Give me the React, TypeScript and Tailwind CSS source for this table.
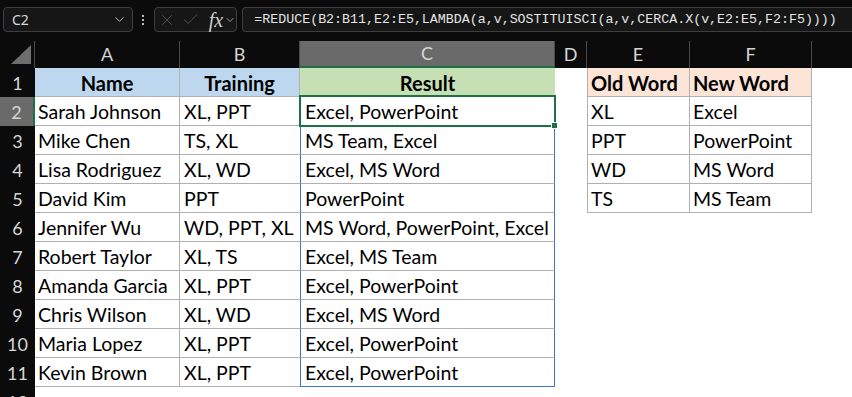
import { X, Check, ChevronDown } from 'lucide-react';

const data = [
  ['Sarah Johnson', 'XL, PPT', 'Excel, PowerPoint'],
  ['Mike Chen', 'TS, XL', 'MS Team, Excel'],
  ['Lisa Rodriguez', 'XL, WD', 'Excel, MS Word'],
  ['David Kim', 'PPT', 'PowerPoint'],
  ['Jennifer Wu', 'WD, PPT, XL', 'MS Word, PowerPoint, Excel'],
  ['Robert Taylor', 'XL, TS', 'Excel, MS Team'],
  ['Amanda Garcia', 'XL, PPT', 'Excel, PowerPoint'],
  ['Chris Wilson', 'XL, WD', 'Excel, MS Word'],
  ['Maria Lopez', 'XL, PPT', 'Excel, PowerPoint'],
  ['Kevin Brown', 'XL, PPT', 'Excel, PowerPoint'],
];

const lookup = [
  ['XL', 'Excel'],
  ['PPT', 'PowerPoint'],
  ['WD', 'MS Word'],
  ['TS', 'MS Team'],
];

const formula = '=REDUCE(B2:B11,E2:E5,LAMBDA(a,v,SOSTITUISCI(a,v,CERCA.X(v,E2:E5,F2:F5))))';

function FormulaBar() {
  return (
    <div className="h-[41px] bg-[#0b0b0b] flex items-start pt-[7px] font-['Noto_Sans',sans-serif]">
      <div className="ml-[3px] w-[132px] h-[25px] rounded-[4px] border border-[#3e3e3e] bg-[#161616] flex items-center justify-between pl-[8px] pr-[5px]">
        <span className="text-[14px] text-[#d8d8d8]">C2</span>
        <ChevronDown size={15} strokeWidth={1.5} className="text-[#c8c8c8]" />
      </div>
      <div className="w-[21px] h-[25px] flex flex-col items-center justify-center gap-[2px]">
        <span className="w-[2px] h-[2px] bg-[#b8b8b8]" />
        <span className="w-[2px] h-[2px] bg-[#b8b8b8]" />
        <span className="w-[2px] h-[2px] bg-[#b8b8b8]" />
      </div>
      <div className="w-[85px] h-[25px] rounded-[4px] border border-[#3e3e3e] bg-[#161616] flex items-center pl-[3px]">
        <X size={18} strokeWidth={1.1} className="text-[#5c5c5c]" />
        <Check size={19} strokeWidth={1.1} className="text-[#5c5c5c] ml-[5px]" />
        <span className="ml-[9px] font-['Liberation_Serif',serif] italic text-[20px] leading-none text-[#cfcfcf]">fx</span>
        <ChevronDown size={12} strokeWidth={1.5} className="text-[#c8c8c8] ml-[1px]" />
      </div>
      <div className="ml-[5px] w-[620px] h-[25px] rounded-l-[4px] border border-r-0 border-[#3e3e3e] bg-[#161616] flex items-center pl-[11px]">
        <span className="font-['Liberation_Mono',monospace] text-[13.3px] text-[#e4e4e4] whitespace-nowrap">{formula}</span>
      </div>
    </div>
  );
}

function ColumnHeaders() {
  const cols = [
    { l: 'A', w: 'w-[145px]' },
    { l: 'B', w: 'w-[120px]' },
    { l: 'C', w: 'w-[255px]', sel: true },
    { l: 'D', w: 'w-[32px]' },
    { l: 'E', w: 'w-[103px]' },
    { l: 'F', w: 'w-[122px]' },
  ];
  return (
    <div className="h-[27px] flex bg-[#0b0b0b] text-[18px] text-[#d6d6d6]">
      <div className="w-[35px] shrink-0 border-r border-[#4a4a4a] flex items-end justify-end pr-[3px] pb-[4px]">
        <svg width="20" height="19" viewBox="0 0 20 19">
          <polygon points="20,0 20,19 0,19" fill="#6e6e6e" />
        </svg>
      </div>
      {cols.map(c => (
        <div
          key={c.l}
          className={`${c.w} shrink-0 border-r border-[#4a4a4a] flex items-center justify-center ${c.sel ? 'bg-[#6a6a6a] border-b-2 border-b-[#1e7145]' : ''}`}
        >
          {c.l}
        </div>
      ))}
      <div className="flex-1" />
    </div>
  );
}

function RowHeader({ n, sel }: { n: number; sel?: boolean }) {
  return (
    <div
      className={`w-[35px] shrink-0 flex items-center justify-center pt-[2px] text-[18px] font-normal text-[#d6d6d6] ${sel ? 'bg-[#6a6a6a] border-r-2 border-[#1e7145]' : 'bg-[#0b0b0b]'}`}
    >
      {n}
    </div>
  );
}

export default function App() {
  return (
    <div className="w-[852px] h-[397px] overflow-hidden bg-white relative font-['Lato',sans-serif]">
      <FormulaBar />
      <ColumnHeaders />

      {/* header row */}
      <div className="h-[29px] flex text-[20px] font-bold text-black">
        <RowHeader n={1} />
        <div className="w-[145px] shrink-0 bg-[#bdd7ee] border-r border-b border-[#b0b0b0] flex items-center justify-center pt-[2px]">Name</div>
        <div className="w-[120px] shrink-0 bg-[#bdd7ee] border-r border-b border-[#b0b0b0] flex items-center justify-center pt-[2px]">Training</div>
        <div className="w-[255px] shrink-0 bg-[#c6e0b4] border-b border-[#b0b0b0] flex items-center justify-center pt-[2px]">Result</div>
        <div className="w-[32px] shrink-0" />
        <div className="w-[103px] shrink-0 bg-[#fce4d6] border-l border-r border-b border-[#b0b0b0] flex items-center pl-[3px] pt-[2px] whitespace-nowrap">Old Word</div>
        <div className="w-[122px] shrink-0 bg-[#fce4d6] border-r border-b border-[#b0b0b0] flex items-center pl-[3px] pt-[2px] whitespace-nowrap">New Word</div>
      </div>

      {data.map((row, i) => {
        const lk = lookup[i];
        const last = i === data.length - 1;
        return (
          <div key={i} className="h-[29px] flex text-[19.5px] text-black">
            <RowHeader n={i + 2} sel={i === 0} />
            <div className="w-[145px] shrink-0 border-r border-b border-[#b0b0b0] flex items-center pl-[3px] pt-[2px] whitespace-nowrap">{row[0]}</div>
            <div className="w-[120px] shrink-0 border-b border-[#b0b0b0] flex items-center pl-[4px] pt-[2px] whitespace-nowrap">{row[1]}</div>
            <div className={`w-[255px] shrink-0 border-l border-r border-l-[#4472c4] border-r-[#4472c4] border-b flex items-center pl-[4px] pt-[2px] whitespace-nowrap ${last ? 'border-b-[#4472c4]' : 'border-b-[#b0b0b0]'}`}>
              {row[2]}
            </div>
            <div className="w-[32px] shrink-0" />
            {lk && (
              <>
                <div className="w-[103px] shrink-0 border-l border-r border-b border-[#b0b0b0] flex items-center pl-[3px] pt-[2px]">{lk[0]}</div>
                <div className="w-[122px] shrink-0 border-r border-b border-[#b0b0b0] flex items-center pl-[3px] pt-[2px]">{lk[1]}</div>
              </>
            )}
          </div>
        );
      })}

      <div className="h-[29px] flex">
        <RowHeader n={12} />
      </div>

      {/* selection on C2 */}
      <div className="absolute left-[299px] top-[95px] w-[257px] h-[32px] border-2 border-[#1e7145] pointer-events-none" />
      <div className="absolute left-[551px] top-[122px] w-[7px] h-[7px] bg-[#1e7145] border border-white pointer-events-none" />
    </div>
  );
}
